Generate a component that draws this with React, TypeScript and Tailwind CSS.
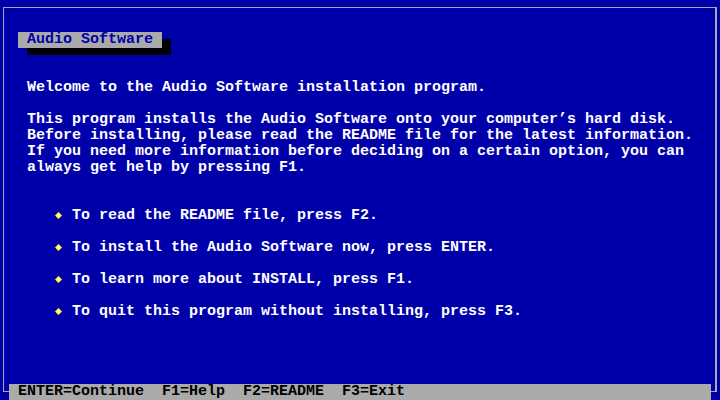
import React from "react";

const Diamond = () => (
  <svg width="9" height="16" viewBox="0 0 9 16" className="shrink-0">
    <polygon points="4.5,4 8,7.5 4.5,11 1,7.5" fill="#ffff55" />
  </svg>
);

const Bullet = ({ children }: { children: React.ReactNode }) => (
  <div className="flex h-[16px] items-start">
    <div className="w-[50px]" />
    <Diamond />
    <div className="w-[9px]" />
    <span className="whitespace-pre">{children}</span>
  </div>
);

export default function App() {
  return (
    <div
      className="w-[720px] h-[400px] overflow-hidden bg-[#0000aa] text-white font-bold text-[15px] leading-[16px]"
      style={{ fontFamily: '"Liberation Mono", "DejaVu Sans Mono", monospace' }}
    >
      <div className="ml-[3px] mt-[7px] w-[714px] h-[385px] border-l border-t border-r-2 border-b border-[#aaaaaa]">
        <div className="relative mt-[24px] ml-[14px] w-[144px] h-[16px]">
          <div className="absolute left-[9px] top-[7px] w-[144px] h-[16px] bg-black" />
          <div className="relative h-[16px] bg-[#aaaaaa] pl-[9px] text-[#0000aa] whitespace-pre">
            Audio Software
          </div>
        </div>

        <div className="ml-[23px] mt-[32px] whitespace-pre">
          Welcome to the Audio Software installation program.
        </div>

        <div className="ml-[23px] mt-[16px] flex flex-col whitespace-pre">
          <div>This program installs the Audio Software onto your computer’s hard disk.</div>
          <div>Before installing, please read the README file for the latest information.</div>
          <div>If you need more information before deciding on a certain option, you can</div>
          <div>always get help by pressing F1.</div>
        </div>

        <div className="mt-[32px] flex flex-col gap-[16px]">
          <Bullet>To read the README file, press F2.</Bullet>
          <Bullet>To install the Audio Software now, press ENTER.</Bullet>
          <Bullet>To learn more about INSTALL, press F1.</Bullet>
          <Bullet>To quit this program without installing, press F3.</Bullet>
        </div>
      </div>

      <div className="relative -mt-[8px] ml-[9px] w-[702px] h-[16px] bg-[#aaaaaa] pl-[9px] text-black whitespace-pre">
        {"ENTER=Continue  F1=Help  F2=README  F3=Exit"}
      </div>
    </div>
  );
}
